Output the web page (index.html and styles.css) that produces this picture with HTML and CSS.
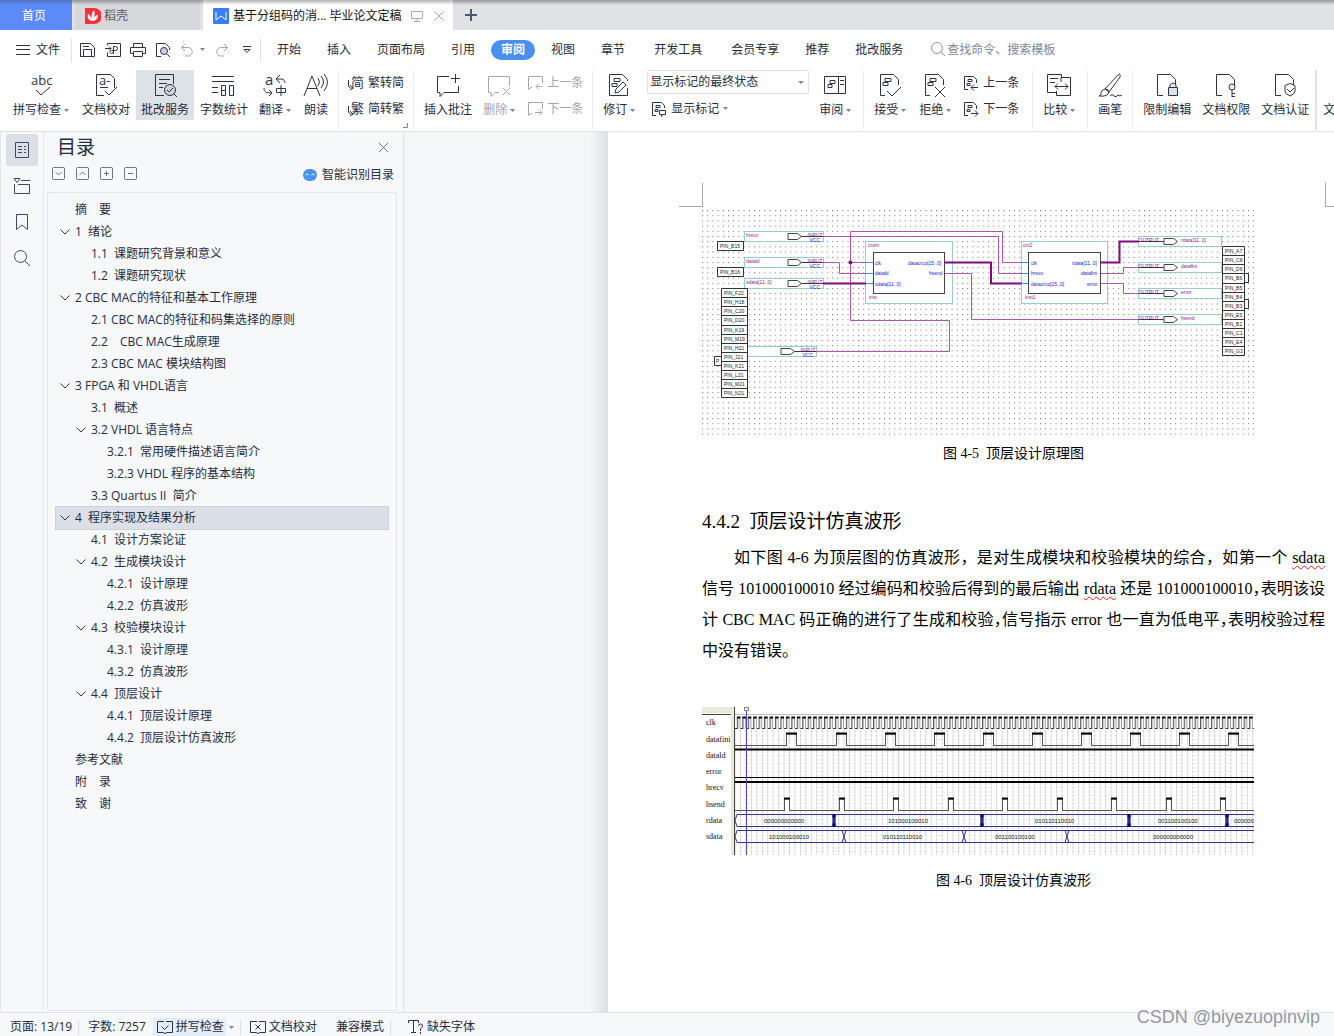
FILE: index.html
```html
<!DOCTYPE html>
<html lang="zh-CN">
<head>
<meta charset="utf-8">
<title>毕业论文定稿</title>
<link rel="stylesheet" href="styles.css">
</head>
<body>
<svg class="defs" aria-hidden="true">
  <defs>
    <symbol id="caret" viewBox="0 0 5 3"><path d="M0 0h5L2.500 3z" fill="#7d879b" stroke="none"/></symbol>
    <symbol id="chev" viewBox="0 0 10 6"><path d="M.5.5 5 5 9.500.5"/></symbol>
    <symbol id="doc" viewBox="0 0 24 24"><path d="M8 21.500H2.500v-21h13l5 5V11"/></symbol>
    <symbol id="mark" viewBox="0 0 24 24"><path d="M8 21.500H3.500v-21h13l5 5V11M8 4.500h6v3H8zM6 8.500h5v3H6z"/></symbol>
    <symbol id="prev" viewBox="0 0 16 16"><path d="M5 14.500H1.500v-13h9l3 3V8M5 4.500h4v2H5zM4 8.500h3v2H4zM15 12.500H8m3-3-3 3 3 3"/></symbol>
    <symbol id="next" viewBox="0 0 16 16"><path d="M5 14.500H1.500v-13h9l3 3V8M5 4.500h4v2H5zM4 8.500h3v2H4zM8 12.500h7m-3-3 3 3-3 3"/></symbol>
    <symbol id="cprev" viewBox="0 0 16 16"><path d="M5 12.500H4l-2.500 2v-13h14V8M15 11.500H9m3-3-3 3 3 3"/></symbol>
    <symbol id="cnext" viewBox="0 0 16 16"><path d="M5 12.500H4l-2.500 2v-13h14V8M8 11.500h7m-3-3 3 3-3 3"/></symbol>
  </defs>
</svg>

<header>
  <nav class="tabs">
    <a class="tab home" href="#">首页</a>
    <a class="tab docer" href="#">
      <svg width="16" height="16" viewBox="0 0 16 16"><path d="M0 0h9a7 7 0 0 1 0 16H0z" fill="#f5323c" stroke="none"/><path d="M7 13C3 12 2 9 3 6c2 1 3 3 4 5C6 7 7 4 9 2c1 3 1 6-1 9 1-2 3-4 5-4 0 3-2 6-6 6z" fill="#fff" stroke="none"/></svg>
      稻壳</a>
    <a class="tab file" href="#">
      <svg width="16" height="16" viewBox="0 0 16 16"><rect width="16" height="16" rx="1" fill="#3a7df0" stroke="none"/><path d="M3 4v8l5-4 5 4V4" stroke="#fff"/></svg>
      <span class="tab-name">基于分组码的消... 毕业论文定稿</span>
      <svg class="pale" width="12" height="12" viewBox="0 0 12 12"><path d="M.5 1.500h11v7H.5zM6 9v2M3 11.500h6"/></svg>
      <svg class="pale" width="12" height="12" viewBox="0 0 12 12"><path d="m1 1 10 10M11 1 1 11"/></svg>
    </a>
    <button class="add" aria-label="新建"><svg width="12" height="12" viewBox="0 0 12 12"><path d="M6 0v12M0 6h12" stroke="#4c5773" stroke-width="2"/></svg></button>
  </nav>

  <div class="menu">
    <button class="filebtn"><svg width="14" height="10" viewBox="0 0 14 10"><path d="M0 .5h14M0 4.500h14M0 9.500h14"/></svg>文件</button>
    <i class="vline"></i>
    <div class="quick">
      <button aria-label="保存"><svg width="16" height="16" viewBox="0 0 16 16"><path d="M.5 1.500h10l4 4v9H.5zM3.500 14V7.500h8V14M3 4.500h6"/></svg></button>
      <button aria-label="输出为PDF"><svg width="16" height="16" viewBox="0 0 16 16"><path d="M2.500 3.500v-2h13v13h-13v-4M0 6.500h6m-2-2 2 2-2 2M8.500 12V4.500h2a2 2 0 0 1 0 4h-4c-2 0-2 3 0 3 1 0 2-1 2-3"/></svg></button>
      <button aria-label="打印"><svg width="16" height="16" viewBox="0 0 16 16"><path d="M3.500 5V1.500h9V5M3 11.500H.5v-6h15v6H13M3.500 9.500h9v5h-9z"/></svg></button>
      <button aria-label="打印预览"><svg width="16" height="16" viewBox="0 0 16 16"><path d="M6 14.500H1.500v-13h9l4 4V8"/><circle cx="9" cy="9" r="3.500" fill="#ccd2db"/><path d="m12 12 3 3"/></svg></button>
      <button class="off" aria-label="撤销"><svg width="14" height="14" viewBox="0 0 14 14"><path d="M5 1 1.500 4.500 5 8M2 4.500h6a4 4 0 0 1 0 8.500H5"/></svg></button>
      <button class="narrow" aria-label="撤销列表"><svg width="5" height="3"><use href="#caret"/></svg></button>
      <button class="off" aria-label="恢复"><svg width="14" height="14" viewBox="0 0 14 14"><path d="m9 1 3.500 3.500L9 8m3-3.500H6A4 4 0 0 0 6 13h3"/></svg></button>
      <button aria-label="更多"><svg width="8" height="8" viewBox="0 0 8 8"><path d="M0 .5h8M1 3.500h6L4 6.500z"/></svg></button>
    </div>
    <i class="vline"></i>
    <nav class="ribbon-tabs">
      <a href="#">开始</a><a href="#">插入</a><a href="#">页面布局</a><a href="#">引用</a><a class="on" href="#">审阅</a><a href="#">视图</a><a href="#">章节</a><a class="wide" href="#">开发工具</a><a class="wide" href="#">会员专享</a><a href="#">推荐</a><a href="#">批改服务</a>
    </nav>
    <label class="find">
      <svg width="15" height="15" viewBox="0 0 15 15"><circle cx="6" cy="6" r="5.500"/><path d="m10 10 4 4"/></svg>
      <input type="text" placeholder="查找命令、搜索模板" aria-label="查找命令">
    </label>
  </div>

  <div class="ribbon">
    <button class="big"><svg class="ic" viewBox="0 0 24 24"><text x="1" y="11" font-size="13">abc</text><path d="m6 16 5 5 9-8"/></svg><span>拼写检查<svg class="car"><use href="#caret"/></svg></span></button>
    <button class="big"><svg class="ic" viewBox="0 0 24 24"><path d="M10 21.500H2.500v-21h14l4 4V14M6 13.500h8M11 17l4 4 8-8"/><text x="5" y="11" font-size="13">a-</text></svg><span>文档校对</span></button>
    <button class="big active"><svg class="ic" viewBox="0 0 24 24"><path d="M11 21.500H2.500v-21h18V10M6 5.500h11M6 9.500h8M6 13.500h4"/><circle cx="17" cy="16" r="5.500" fill="#ccd2db"/><path d="m14 16 2 2 4-4M21 20l3 3"/></svg><span>批改服务</span></button>
    <button class="big"><svg class="ic" viewBox="1 0 24 24"><path d="M1 2.500h22M1 7.500h22M1 13.500h6M1 18.500h6M10.500 11.500h4v10h-4zM10 16.500h5M18.500 11.500h4v10h-4z"/></svg><span>字数统计</span></button>
    <button class="big"><svg class="ic" viewBox="1 0 24 24"><text x="2" y="11" font-size="15">a</text><path d="m17 1-4 4 4 4M13 5h5c3 0 4 2 4 4M1 14c0 4 2 5 8 5m-3-3 3 3-3 3M13.500 14.500h9v4h-9zM18 11v11"/></svg><span>翻译<svg class="car"><use href="#caret"/></svg></span></button>
    <button class="big"><svg class="ic" viewBox="0 0 24 24"><path d="M0 22 8 2l8 20M3 14.500h10M14 4q3 4 0 8M17 2q5 6 0 12M20 0q7 8 0 17"/></svg><span>朗读</span></button>
    <i class="sep"></i>
    <div class="stack">
      <button class="mini"><svg viewBox="0 0 16 16"><text x="3" y="12" font-size="13">简</text><path d="M.5 5v5c0 2 1 3 3 3M2 10l3 3-3 2"/></svg>繁转简</button>
      <button class="mini"><svg viewBox="0 0 16 16"><text x="3" y="12" font-size="13">繁</text><path d="M.5 5v5c0 2 1 3 3 3M2 10l3 3-3 2"/></svg>简转繁</button>
      <svg class="corner" width="5" height="5" viewBox="0 0 5 5"><path d="M0 4.500h4.500V0"/></svg>
    </div>
    <i class="sep"></i>
    <button class="big"><svg class="ic" viewBox="0 0 24 24"><path d="M13 2.500H1.500v16H4v4l4-4h14.500V12M19.500 0v9M15 4.500h9"/></svg><span>插入批注</span></button>
    <button class="big off"><svg class="ic" viewBox="2 0 24 24"><path d="M23.500 12V2.500h-21v16H5v4l4-4h4M17 14l7 7M24 14l-7 7"/></svg><span>删除<svg class="car"><use href="#caret"/></svg></span></button>
    <div class="stack">
      <button class="mini off"><svg><use href="#cprev"/></svg>上一条</button>
      <button class="mini off"><svg><use href="#cnext"/></svg>下一条</button>
    </div>
    <i class="sep"></i>
    <button class="big"><svg class="ic" viewBox="2 0 24 24"><path d="M21.500 14v7.500h-18v-21h13l5 5V7M8 4.500h6v3H8zM6 9.500h5v3H6zM9 19l1-4 7-7 3 3-7 7z"/></svg><span>修订<svg class="car"><use href="#caret"/></svg></span></button>
    <div class="stack view">
      <select aria-label="显示状态"><option>显示标记的最终状态</option></select>
      <button class="mini"><svg viewBox="0 0 16 16"><path d="M5 14.500H1.500v-13h9l3 3V7M5 4.500h4v2H5zM4 8.500h3v2H4zM8.500 9.500h6v4h-3l-1 2v-2h-2z"/></svg>显示标记<svg class="car"><use href="#caret"/></svg></button>
    </div>
    <button class="big"><svg class="ic" viewBox="1 1 24 24"><path d="M1.500 3.500h21v17h-21zM15.500 4v16M7 7.500h5v3H7zM5 11.500h4v3H5zM17 7.500h4M17 11.500h4"/></svg><span>审阅<svg class="car"><use href="#caret"/></svg></span></button>
    <i class="sep"></i>
    <button class="big"><svg class="ic" viewBox="2 0 24 24"><use href="#mark" width="24" height="24"/><path d="m10 17 5 5 9-9"/></svg><span>接受<svg class="car"><use href="#caret"/></svg></span></button>
    <button class="big"><svg class="ic" viewBox="2 0 24 24"><use href="#mark" width="24" height="24"/><path d="m13 13 10 10M23 13 13 23"/></svg><span>拒绝<svg class="car"><use href="#caret"/></svg></span></button>
    <div class="stack last">
      <button class="mini"><svg><use href="#prev"/></svg>上一条</button>
      <button class="mini"><svg><use href="#next"/></svg>下一条</button>
    </div>
    <i class="sep"></i>
    <button class="big"><svg class="ic" viewBox="1 0 24 24"><path d="M9 18.500H.5v-18h14v3M3 4.500h8M3 8.500h5M14 8V3.500h9.500v18h-14V17M8 12.500h13m-10-3-3 3 3 3m7-6 3 3-3 3"/></svg><span>比较<svg class="car"><use href="#caret"/></svg></span></button>
    <i class="sep"></i>
    <button class="big"><svg class="ic" viewBox="0 0 24 24"><path d="M7 15 20 1q3-2 2 2L11 18zM7 15q4 0 4 3-1 5-10 4 3-1 2-3 0-3 4-4zM12 22q2-3 4 0 2 2 4-1 2 2 4 0"/></svg><span>画笔</span></button>
    <i class="sep"></i>
    <button class="big"><svg class="ic" viewBox="0 0 24 24"><use href="#doc" width="24" height="24"/><path d="M13.500 13.500h9v8h-9zM15 13v-2q3-4 6 0v2" fill="#dfe3e8"/></svg><span>限制编辑</span></button>
    <button class="big"><svg class="ic" viewBox="0 0 24 24"><use href="#doc" width="24" height="24"/><circle cx="18" cy="13" r="3"/><path d="M18 16v7M18 19.500h3M18 22.500h3"/></svg><span>文档权限</span></button>
    <button class="big"><svg class="ic" viewBox="0 0 24 24"><use href="#doc" width="24" height="24"/><path d="m17 9.500 5 2V17q0 3-5 5-5-2-5-5v-5.500zM14 15l3 3 4-4"/></svg><span>文档认证</span></button>
    <i class="sep end"></i>
    <button class="big bare"><span>文</span></button>
  </div>
</header>

<main>
  <nav class="side">
    <button class="active" aria-label="目录"><svg width="16" height="18" viewBox="0 0 16 18"><path d="M1.500 1.500h13v15h-13zM4 5.500h4M10 5.500h2M4 8.500h4M10 8.500h2M4 11.500h4M10 11.500h2"/></svg></button>
    <button aria-label="章节"><svg width="18" height="16" viewBox="0 0 18 16"><path d="M1 .5h6l-3 4zM8 2.500h9M1.500 6v9.500h15v-9H5"/></svg></button>
    <button aria-label="书签"><svg width="12" height="18" viewBox="0 0 12 18"><path d="M.5 1.500h11v15L6 12 .5 16.500z"/></svg></button>
    <button aria-label="查找"><svg width="18" height="18" viewBox="0 0 18 18"><circle cx="7.500" cy="7.500" r="6"/><path d="m12 12 5 5"/></svg></button>
  </nav>

  <aside class="outline">
    <div class="title"><h2>目录</h2><button aria-label="关闭"><svg width="11" height="11" viewBox="0 0 11 11"><path d="m1 1 9 9M10 1l-9 9"/></svg></button></div>
    <div class="tools">
      <button aria-label="展开"><svg viewBox="0 0 13 13"><rect x=".5" y=".5" width="12" height="12" rx="1"/><path d="m3.500 5 3 3 3-3"/></svg></button>
      <button aria-label="收起"><svg viewBox="0 0 13 13"><rect x=".5" y=".5" width="12" height="12" rx="1"/><path d="m3.500 8 3-3 3 3"/></svg></button>
      <button aria-label="增加"><svg viewBox="0 0 13 13"><rect x=".5" y=".5" width="12" height="12" rx="1"/><path d="M6.500 4v5M4 6.500h5"/></svg></button>
      <button aria-label="减少"><svg viewBox="0 0 13 13"><rect x=".5" y=".5" width="12" height="12" rx="1"/><path d="M4 6.500h5"/></svg></button>
      <a class="smart" href="#"><svg width="14" height="12" viewBox="0 0 14 12"><rect width="14" height="12" rx="6" fill="#4a94f0" stroke="none"/><path d="M2.500 6q1.500-2 3 0M8.500 6q1.500-2 3 0" stroke="#fff"/></svg>智能识别目录</a>
    </div>
    <ul class="toc">
      <li><a href="#">摘&emsp;要</a></li>
      <li><a href="#"><svg><use href="#chev"/></svg>1&nbsp; 绪论</a></li>
      <li class="l2"><a href="#">1.1&nbsp; 课题研究背景和意义</a></li>
      <li class="l2"><a href="#">1.2&nbsp; 课题研究现状</a></li>
      <li><a href="#"><svg><use href="#chev"/></svg>2 CBC MAC的特征和基本工作原理</a></li>
      <li class="l2"><a href="#">2.1 CBC MAC的特征和码集选择的原则</a></li>
      <li class="l2"><a href="#">2.2&emsp;CBC MAC生成原理</a></li>
      <li class="l2"><a href="#">2.3 CBC MAC 模块结构图</a></li>
      <li><a href="#"><svg><use href="#chev"/></svg>3 FPGA 和 VHDL语言</a></li>
      <li class="l2"><a href="#">3.1&nbsp; 概述</a></li>
      <li class="l2"><a href="#"><svg><use href="#chev"/></svg>3.2 VHDL 语言特点</a></li>
      <li class="l3"><a href="#">3.2.1&nbsp; 常用硬件描述语言简介</a></li>
      <li class="l3"><a href="#">3.2.3 VHDL 程序的基本结构</a></li>
      <li class="l2"><a href="#">3.3 Quartus II&nbsp; 简介</a></li>
      <li class="sel"><a href="#"><svg><use href="#chev"/></svg>4&nbsp; 程序实现及结果分析</a></li>
      <li class="l2"><a href="#">4.1&nbsp; 设计方案论证</a></li>
      <li class="l2"><a href="#"><svg><use href="#chev"/></svg>4.2&nbsp; 生成模块设计</a></li>
      <li class="l3"><a href="#">4.2.1&nbsp; 设计原理</a></li>
      <li class="l3"><a href="#">4.2.2&nbsp; 仿真波形</a></li>
      <li class="l2"><a href="#"><svg><use href="#chev"/></svg>4.3&nbsp; 校验模块设计</a></li>
      <li class="l3"><a href="#">4.3.1&nbsp; 设计原理</a></li>
      <li class="l3"><a href="#">4.3.2&nbsp; 仿真波形</a></li>
      <li class="l2"><a href="#"><svg><use href="#chev"/></svg>4.4&nbsp; 顶层设计</a></li>
      <li class="l3"><a href="#">4.4.1&nbsp; 顶层设计原理</a></li>
      <li class="l3"><a href="#">4.4.2&nbsp; 顶层设计仿真波形</a></li>
      <li><a href="#">参考文献</a></li>
      <li><a href="#">附&emsp;录</a></li>
      <li><a href="#">致&emsp;谢</a></li>
    </ul>
  </aside>

  <div class="gutter"></div>

  <article class="page">
    <div class="crop"><i class="crop-l"></i><i class="crop-r"></i></div>
    <figure>
      <svg class="schema" width="552" height="228" viewBox="702 209 552 228">
        <defs>
          <pattern id="dots" x="702" y="210" width="5.200" height="5.200" patternUnits="userSpaceOnUse"><rect width="1" height="1" fill="#6c6c6c"/></pattern>
          <path id="pin" d="M.5-3H10l4 3-4 3H.5z" fill="#fff" stroke="#444"/>
          <g id="in"><rect x="-43" y="-5" width="79" height="10" fill="#fff" stroke="#9cc"/><path d="M14 0h22" stroke="#333"/><use href="#pin"/><text x="20" y="0" class="pu">INPUT</text><text x="22" y="5" class="bl">VCC</text></g>
          <g id="out"><rect x="-25" y="-5" width="83" height="10" fill="#fff" stroke="#9cc"/><path d="M-25 0H0" stroke="#333"/><use href="#pin"/><text x="-25" y="0" class="pu">OUTPUT</text></g>
        </defs>
        <rect x="702" y="209" width="552" height="228" fill="url(#dots)"/>
        <use href="#in" x="787.500" y="236.500"/><use href="#in" x="787.500" y="262.500"/><use href="#in" x="787.500" y="283.500"/><use href="#in" x="780.500" y="351.500"/>
        <use href="#out" x="1163.500" y="241.500"/><use href="#out" x="1163.500" y="267.500"/><use href="#out" x="1163.500" y="293.500"/><use href="#out" x="1163.500" y="319.500"/>
        <g class="pu"><text x="746" y="237">hrecv</text><text x="746" y="263">datald</text><text x="746" y="284">sdata[11..0]</text><text x="1181" y="242">rdata[11..0]</text><text x="1181" y="268">datafini</text><text x="1181" y="294">error</text><text x="1181" y="320">hsend</text></g>
        <g fill="#fff" stroke="#9cc"><rect x="865.500" y="241.500" width="87" height="62"/><rect x="1021.500" y="241.500" width="86" height="62"/></g>
        <g fill="#fff" stroke="#444"><rect x="873.500" y="252.500" width="71" height="41"/><rect x="1028.500" y="252.500" width="72" height="41"/></g>
        <g fill="none" stroke="#a45ca8">
          <path d="M823 236.500h175.500v37h23M816 351.500h133.500v-31h-99v-89h152v31h19M850 262.500h16M823 262.500h16.500v11H866M945 273.500h26.500v46H1138M1101 273.500h22.500v-6h15M1101 283.500h22.500v10h15"/>
          <path d="M823 283.500h43M945 262.500h46v21h31M1101 262.500h18.500v-21h19" stroke="#800a80" stroke-width="2"/>
          <path d="M866 262.500h7M866 273.500h7M866 283.500h7M1021 262.500h7M1021 273.500h7M1021 283.500h7" stroke="#3a8fe0"/>
        </g>
        <circle cx="850.500" cy="262.500" r="2" fill="#800a80"/>
        <g class="pu"><text x="868" y="247">crom</text><text x="869" y="299">inst</text><text x="1023" y="247">crc2</text><text x="1025" y="299">inst1</text></g>
        <g class="bl"><text x="875" y="265">clk</text><text x="875" y="275">datald</text><text x="875" y="286">sdata[11..0]</text><text x="908" y="265">datacrco[15..0]</text><text x="929" y="275">hsend</text><text x="1031" y="265">clk</text><text x="1031" y="275">hrecv</text><text x="1031" y="286">datacrco[15..0]</text><text x="1072" y="265">rdata[11..0]</text><text x="1081" y="275">datafini</text><text x="1087" y="286">error</text></g>
        <g fill="#fff" stroke="#333"><path d="M714.500 356.500h8v9h-8zM717.500 241.500h26v9h-26zM717.500 267.500h26v9h-26zM1244.500 273.500h4v9h-4zM1244.500 299.500h4v9h-4z"/><path d="M721.500 288.500h26v109h-26zM1222.500 246.500h22v109h-22z"/>
          <path d="M721 297.500h27M721 306.500h27M721 315.500h27M721 325.500h27M721 334.500h27M721 343.500h27M721 352.500h27M721 361.500h27M721 370.500h27M721 379.500h27M721 388.500h27M1222 255.500h23M1222 264.500h23M1222 273.500h23M1222 283.500h23M1222 292.500h23M1222 301.500h23M1222 310.500h23M1222 319.500h23M1222 328.500h23M1222 337.500h23M1222 346.500h23"/></g>
        <g class="bk"><text x="716" y="363">P</text><text x="720" y="248">PIN_B15</text><text x="720" y="274">PIN_B16</text>
          <text x="724" y="295">PIN_F22</text><text x="724" y="304">PIN_H18</text><text x="724" y="313">PIN_C20</text><text x="724" y="322">PIN_D20</text><text x="724" y="332">PIN_K19</text><text x="724" y="341">PIN_M19</text><text x="724" y="350">PIN_H21</text><text x="724" y="359">PIN_J21</text><text x="724" y="368">PIN_K21</text><text x="724" y="377">PIN_L21</text><text x="724" y="386">PIN_M21</text><text x="724" y="395">PIN_N21</text>
          <text x="1225" y="253">PIN_A7</text><text x="1225" y="262">PIN_C8</text><text x="1225" y="271">PIN_D6</text><text x="1225" y="280">PIN_B6</text><text x="1225" y="290">PIN_B5</text><text x="1225" y="299">PIN_B4</text><text x="1225" y="308">PIN_B3</text><text x="1225" y="317">PIN_E5</text><text x="1225" y="326">PIN_B1</text><text x="1225" y="335">PIN_C1</text><text x="1225" y="344">PIN_E4</text><text x="1225" y="353">PIN_G3</text></g>
      </svg>
      <figcaption>图 4-5&nbsp; 顶层设计原理图</figcaption>
    </figure>

    <h3>4.4.2&nbsp; 顶层设计仿真波形</h3>
    <p>
      <span class="ln first">如下图 4-6 为顶层图的仿真波形，是对生成模块和校验模块的综合，如第一个 <u>sdata</u></span>
      <span class="ln">信号 101000100010 经过编码和校验后得到的最后输出 <u>rdata</u> 还是 101000100010<b>，</b>表明该设</span>
      <span class="ln">计 CBC MAC 码正确的进行了生成和校验<b>，</b>信号指示 error 也一直为低电平<b>，</b>表明校验过程</span>
      <span class="ln end">中没有错误。</span>
    </p>

    <figure class="second">
      <svg class="wave" width="552" height="148" viewBox="702 707 552 148">
        <defs>
          <pattern id="grid" x="740" y="750" width="5.450" height="4" patternUnits="userSpaceOnUse"><path d="M.5 0v3" stroke="#ccc"/></pattern>
          <pattern id="clock" x="735" y="716" width="5.450" height="14" patternUnits="userSpaceOnUse"><path d="M0 12.500h2.500V1.500h3v11" fill="none" stroke="#333"/><path d="M2 1.500h3.500" stroke="#000" stroke-width="2"/></pattern>
          <g id="p1"><path d="M0 745.500h11" stroke="#fff" stroke-width="2"/><path d="M.5 746v-12h10v12" fill="none" stroke="#555"/><path d="M0 733.500h11" stroke="#000" stroke-width="2"/></g>
          <g id="p2"><path d="M0 810.500h6" stroke="#fff" stroke-width="2"/><path d="M.5 811v-12h5v12" fill="none" stroke="#555"/><path d="M0 798.500h6" stroke="#000" stroke-width="2"/></g>
          <path id="x" d="M-2 0 2 12M2 0-2 12" fill="none" stroke="#33338a"/>
          <path id="xx" d="M-1 0h2v12h-2z" fill="#000080" stroke="#000080"/>
        </defs>
        <rect x="735" y="730" width="519" height="125" fill="url(#grid)"/>
        <rect x="702" y="707" width="33" height="6" fill="#ece9d8"/><rect x="731" y="707" width="4" height="148" fill="#ece9d8"/>
        <path d="M702 714.500h29M734.500 707v148" stroke="#444"/><path d="M735 714.500h519" stroke="#bbb"/>
        <rect x="735" y="716" width="519" height="14" fill="url(#clock)"/>
        <path d="M735 745.500h519M735 810.500h519" stroke="#555"/>
        <path d="M735 749.500h519M735 782h519" stroke="#000" stroke-width="2"/><path d="M735 777.500h519" stroke="#000"/>
        <use href="#p1" x="786"/><use href="#p1" x="836"/><use href="#p1" x="885"/><use href="#p1" x="934"/><use href="#p1" x="983"/><use href="#p1" x="1032"/><use href="#p1" x="1081"/><use href="#p1" x="1130"/><use href="#p1" x="1179"/><use href="#p1" x="1228"/>
        <use href="#p2" x="784"/><use href="#p2" x="839"/><use href="#p2" x="893"/><use href="#p2" x="948"/><use href="#p2" x="1002"/><use href="#p2" x="1057"/><use href="#p2" x="1111"/><use href="#p2" x="1166"/><use href="#p2" x="1220"/>
        <path d="M1254 814.500H737l-2 6 2 6h517M1254 830.500H737l-2 6 2 6h517" fill="none" stroke="#33338a"/>
        <use href="#xx" x="834" y="814.500"/><use href="#xx" x="982" y="814.500"/><use href="#xx" x="1129" y="814.500"/><use href="#xx" x="1227" y="814.500"/>
        <use href="#x" x="834" y="814.500"/><use href="#x" x="982" y="814.500"/><use href="#x" x="1129" y="814.500"/><use href="#x" x="1227" y="814.500"/>
        <use href="#x" x="844" y="830.500"/><use href="#x" x="964" y="830.500"/><use href="#x" x="1067" y="830.500"/>
        <path d="M746.500 707v148" stroke="#4848c8"/><rect x="744.500" y="707.500" width="4" height="3" fill="#ece9d8" stroke="#888"/>
        <g class="sig"><text x="706" y="725">clk</text><text x="706" y="742">datafini</text><text x="706" y="758">datald</text><text x="706" y="774">error</text><text x="706" y="790">hrecv</text><text x="706" y="807">hsend</text><text x="706" y="823">rdata</text><text x="706" y="839">sdata</text></g>
        <g class="num"><text x="764" y="823">000000000000</text><text x="888" y="823">101000100010</text><text x="1035" y="823">010110110010</text><text x="1158" y="823">001100100100</text><text x="1234" y="823">000000</text><text x="769" y="839">101000100010</text><text x="883" y="839">010110110010</text><text x="995" y="839">001100100100</text><text x="1153" y="839">000000000000</text></g>
      </svg>
      <figcaption>图 4-6&nbsp; 顶层设计仿真波形</figcaption>
    </figure>
  </article>
</main>

<footer>
  <span class="st">页面: 13/19</span><i></i>
  <span class="st">字数: 7257</span>
  <button class="spell"><svg width="16" height="14" viewBox="0 0 16 14"><path d="M7 1.500H.5v11H6l2 1 2-1h5.500v-11H9M4.500 6.500l3 3 4-4"/></svg>拼写检查</button>
  <svg class="car"><use href="#caret"/></svg><i></i>
  <button class="check"><svg width="16" height="14" viewBox="0 0 16 14"><path d="M7 1.500H.5v11H6l2 1 2-1h5.500v-11H9M5.500 4.500l5 5M10.500 4.500l-5 5"/></svg>文档校对</button>
  <span class="compat">兼容模式</span><i></i>
  <button class="font"><svg width="16" height="14" viewBox="0 0 16 14"><path d="M.5 3V.5h10V3M5.500 1v11M3 12.500h5M10.500 6q0-2 2-2t2 2q0 1-2 3v2M12.500 12v2"/></svg>缺失字体</button>
  <span class="author">CSDN @biyezuopinvip</span>
</footer>
</body>
</html>
```
FILE: styles.css
```css
* { box-sizing: border-box; }
body {
  margin: 0;
  height: 100vh;
  display: flex;
  flex-direction: column;
  overflow: hidden;
  background: #f6f8fa;
  color: #252c3d;
  font: 12px/16px "Open Sans", "Noto Sans CJK SC", sans-serif;
}
a { color: inherit; text-decoration: none; }
button {
  border: 0;
  padding: 0;
  background: none;
  font: inherit;
  color: inherit;
  white-space: nowrap;
}
svg { fill: none; stroke: #2b3346; flex: none; }
svg text { fill: #2b3346; stroke: none; }
i { flex: none; }
.defs { position: absolute; width: 0; height: 0; }
.car { width: 5px; height: 3px; margin: 0 2px 0 3px; }

/* window tabs */
.tabs {
  height: 30px;
  display: flex;
  background: linear-gradient(#98989a, #e1e2e6 5px);
}
.tab { display: flex; align-items: center; padding-top: 1px; }
.home {
  width: 72px;
  justify-content: center;
  padding-right: 4px;
  color: #fff;
  background: linear-gradient(#5673bb, #5c8af8 5px);
}
.docer {
  width: 125px;
  margin: 0 3px;
  padding-left: 10px;
  gap: 3px;
  color: #555a66;
  background: linear-gradient(#969698, #d6d7da 5px);
}
.file { width: 250px; padding-left: 10px; gap: 10px; background: linear-gradient(#b4b4b4, #fff 5px); }
.tab-name { margin: 0 -1px 0 -6px; color: #111; white-space: nowrap; }
.pale { stroke: #a4adc0; }
.add { width: 36px; display: grid; place-items: center; }

/* menu line */
.menu { height: 38px; display: flex; align-items: center; padding-top: 1px; background: #fff; }
.filebtn { display: flex; align-items: center; gap: 6px; padding: 0 11px 0 16px; }
.vline { width: 1px; height: 24px; background: #dcdfe5; }
.quick { display: flex; align-items: center; gap: 9px; padding: 0 9px 0 8px; }
.quick button { display: flex; }
.quick .narrow { margin: 0 1px 0 -3px; }
.quick button:last-child { margin-left: 5px; }
.off { color: #a3a6ad; }
.off svg { stroke: #a3a6ad; }
.ribbon-tabs { display: flex; align-items: center; padding-left: 3px; white-space: nowrap; }
.ribbon-tabs a { padding: 0 13px; }
.ribbon-tabs .on {
  margin: 0 3px;
  padding: 2px 10px;
  border-radius: 10px;
  background: #4a90f0;
  color: #fff;
  font-weight: bold;
}
.ribbon-tabs .wide { margin-left: 3px; }
.find { display: flex; align-items: center; gap: 1px; margin-left: 15px; }
.find svg { stroke: #8b94a8; }
.find input {
  width: 140px;
  padding: 0;
  border: 0;
  outline: 0;
  background: none;
  font: inherit;
}
.find input::placeholder { color: #7d869b; opacity: 1; }

/* ribbon */
.ribbon {
  height: 64px;
  display: flex;
  gap: 1px;
  padding: 2px 0 0 8px;
  overflow: hidden;
  background: #fff;
  border-bottom: 1px solid #dfe1e5;
}
.big {
  flex: none;
  height: 50px;
  padding: 4px 5px 0;
  display: flex;
  flex-direction: column;
  align-items: center;
  gap: 4px;
}
.big.active { background: #dde2e7; }
.big.bare { justify-content: flex-end; padding-bottom: 2px; }
.big > span { display: flex; align-items: center; }
.ic { width: 24px; height: 24px; overflow: visible; }
.sep { width: 1px; height: 60px; margin: 0 4px; background: #eceef1; }
.sep.end { width: 2px; margin: 0; background: #dfe2ea; }
.stack { position: relative; flex: none; display: flex; flex-direction: column; gap: 2px; }
.stack.last { margin-right: 4px; }
.mini { display: flex; align-items: center; gap: 4px; height: 24px; padding: 1px 4px 0; }
.mini svg { width: 16px; height: 16px; overflow: visible; }
.mini .car { width: 5px; height: 3px; margin: 0; }
.corner { position: absolute; right: 0; bottom: 3px; stroke: #7d879b; }
.view { margin: 0 4px; }
.view select {
  width: 162px;
  height: 24px;
  padding: 0 2px;
  border: 1px solid #dcdfe5;
  border-radius: 2px;
  appearance: none;
  color: inherit;
  font: inherit;
  background: #fff;
}
.view::after {
  content: "";
  position: absolute;
  right: 5px;
  top: 11px;
  border: solid transparent;
  border-width: 3px 3px 0;
  border-top-color: #7d879b;
}

/* workspace */
main { flex: 1; min-height: 0; display: flex; }
.side {
  flex: none;
  width: 44px;
  display: flex;
  flex-direction: column;
  align-items: center;
  gap: 4px;
  padding-top: 2px;
  border: solid #e4e7ec;
  border-width: 0 1px;
}
.side button { width: 32px; height: 32px; display: grid; place-items: center; border-radius: 2px; }
.side .active { background: #dbe0e7; }
.side svg { stroke: #3b4867; }
.outline {
  flex: none;
  width: 360px;
  display: flex;
  flex-direction: column;
  padding: 0 6px 1px 3px;
  border-right: 1px solid #e0e3e9;
}
.title { display: flex; align-items: center; justify-content: space-between; height: 30px; padding: 0 8px 0 10px; }
.title h2 { margin: 0; font-size: 19px; line-height: 28px; font-weight: 400; }
.title svg { stroke: #6b7485; display: block; }
.tools { display: flex; align-items: center; gap: 11px; height: 23px; padding: 0 3px 0 5px; }
.tools button, .tools button svg { width: 13px; height: 13px; display: block; }
.tools button svg { stroke: #6b7485; }
.smart { display: flex; align-items: center; gap: 5px; margin-left: auto; padding-top: 2px; }
.toc {
  flex: 1;
  margin: 7px 0 0;
  padding: 6px 8px;
  list-style: none;
  border: 1px solid #e2e5ea;
  border-radius: 2px;
}
.toc a {
  display: flex;
  align-items: center;
  height: 22px;
  padding-left: 19px;
  white-space: pre;
}
.toc .l2 a { padding-left: 35px; }
.toc .l3 a { padding-left: 51px; }
.toc svg { width: 10px; height: 6px; margin: 0 5px 0 -15px; }
.toc .sel { background: #dbe0e8; box-shadow: 0 0 0 1px #ccd2dc; }
.gutter { flex: none; width: 204px; background: linear-gradient(90deg, #f5f6f8 186px, #dcdee2); }

/* document */
.page {
  flex: 1;
  min-width: 0;
  overflow: hidden;
  padding: 51px 9px 0 94px;
  background: #fff;
  color: #000;
  font-family: "Liberation Serif", "Noto Sans CJK SC", serif;
}
.crop { display: flex; justify-content: space-between; height: 24px; margin: 0 -9px 2px -23px; }
.crop-l { width: 24px; border: solid #a8a8a8; border-width: 0 1px 1px 0; }
.crop-r { width: 9px; border: solid #a8a8a8; border-width: 0 0 1px 1px; }
figure { margin: 0; }
figure > svg { display: block; stroke: none; }
figcaption { margin-top: 7px; font-size: 14px; line-height: 20px; text-align: center; }
.second { margin-top: 41px; }
.second figcaption { margin-top: 16px; }
h3 { margin: 43px 0 5px; font-size: 19px; line-height: 30px; font-weight: 400; }
p { margin: 0; font-size: 16px; line-height: 31px; }
.ln { display: block; text-align: justify; text-align-last: justify; white-space: nowrap; }
.first { padding-left: 32px; }
.end { text-align-last: left; }
.ln b { font-weight: inherit; font-feature-settings: "halt"; }
.ln u { text-decoration: underline wavy #e02020 1px; text-underline-offset: 2px; }
.schema text { font: 5px "Liberation Sans", sans-serif; fill: #222; }
.schema .pu text, .schema text.pu { fill: #8c1c8c; }
.schema .bl text, .schema text.bl { fill: #2424c8; }
.wave text { fill: #111; }
.sig text { font: 8px "Liberation Serif", serif; }
.num text { font: 6px "Liberation Sans", sans-serif; }

/* status line */
footer {
  position: relative;
  flex: none;
  height: 24px;
  display: flex;
  align-items: center;
  padding: 5px 14px 0 10px;
  border-top: 1px solid #e0e3e9;
  white-space: nowrap;
}
footer i { width: 1px; height: 14px; margin: 0 9px 0 6px; background: #dcdfe5; }
footer button { display: flex; align-items: center; gap: 3px; height: 18px; }
footer .car { margin: 0 0 0 3px; }
.spell { margin-left: 7px; padding: 0 2px 0 4px; background: #e4eefb; }
.compat { margin-left: 19px; }
.font { margin-left: 8px; }
.author {
  position: absolute;
  right: 14px;
  bottom: 9px;
  font: 18px/20px "Liberation Sans", sans-serif;
  color: #96999e;
}
```
